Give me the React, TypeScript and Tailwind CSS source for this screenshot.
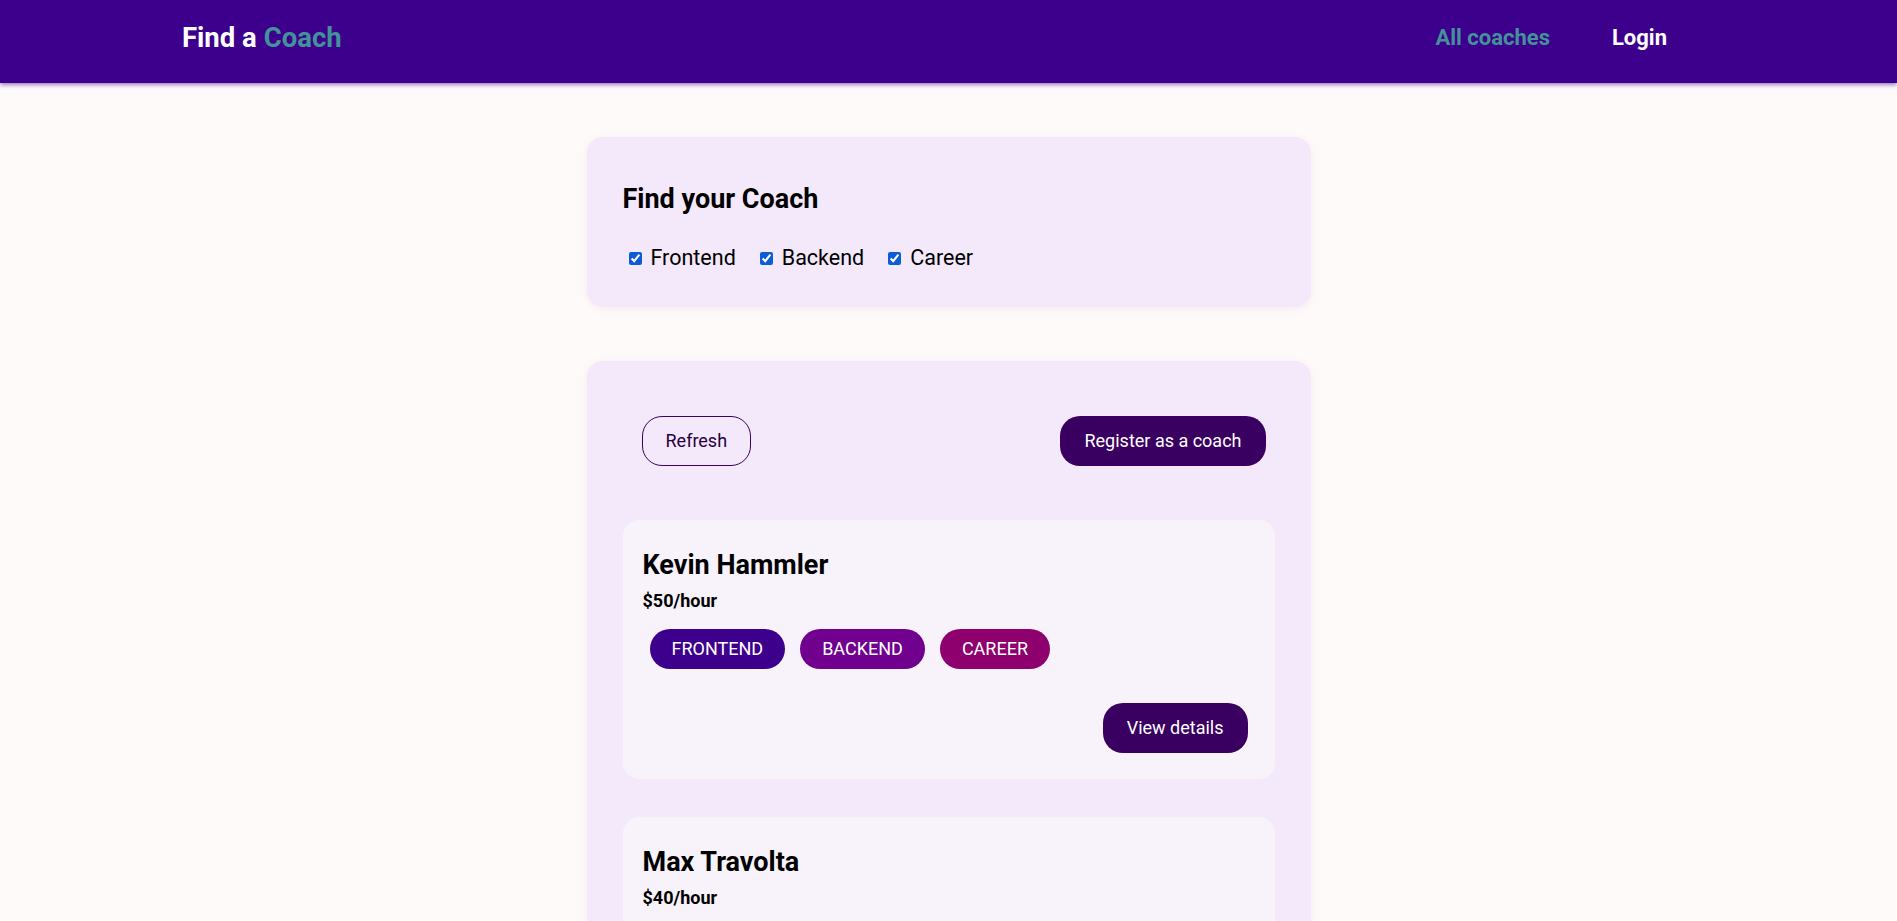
import { useState } from "react";

type Area = "frontend" | "backend" | "career";

const coaches: { id: string; name: string; rate: number; areas: Area[] }[] = [
  { id: "c1", name: "Kevin Hammler", rate: 50, areas: ["frontend", "backend", "career"] },
  { id: "c2", name: "Max Travolta", rate: 40, areas: ["frontend", "career"] },
];

const badgeColors: Record<Area, string> = {
  frontend: "bg-[#3d008d]",
  backend: "bg-[#71008f]",
  career: "bg-[#8d006e]",
};

function CoachItem({ name, rate, areas }: { name: string; rate: number; areas: Area[] }) {
  return (
    <li className="rounded-2xl bg-[#f8f3fb] pl-[20px] pr-[27px] pt-[29px] pb-[26px]">
      <h3 className="text-[27px] font-bold leading-[32px] text-black">{name}</h3>
      <h4 className="mt-[9px] text-[18px] font-bold leading-[22px] text-black">${rate}/hour</h4>
      <div className="mt-[17px] ml-[7px] flex gap-[15px]">
        {areas.map((a) => (
          <span
            key={a}
            className={`${badgeColors[a]} h-[40px] px-[22px] rounded-full flex items-center text-[18px] leading-[22px] text-white uppercase`}
          >
            {a}
          </span>
        ))}
      </div>
      <div className="mt-[34px] flex justify-end">
        <button className="h-[50px] px-[24px] rounded-[20px] bg-[#3a0061] text-white text-[18px] leading-[22px]">
          View details
        </button>
      </div>
    </li>
  );
}

export default function App() {
  const [filters, setFilters] = useState<Record<Area, boolean>>({
    frontend: true,
    backend: true,
    career: true,
  });

  const toggle = (a: Area) => setFilters((f) => ({ ...f, [a]: !f[a] }));

  const visible = coaches.filter((c) => c.areas.some((a) => filters[a]));

  return (
    <div className="min-h-screen bg-[#fffafa] font-['Roboto',sans-serif] text-black">
      <header className="relative z-10 h-[83px] bg-[#3d008d] shadow-[0_2px_4px_rgba(61,0,141,0.5)]">
        <nav className="h-[75px] flex items-center justify-between pl-[182px] pr-[230px]">
          <h1 className="text-[27.5px] font-bold leading-[32px] text-white">
            <a href="#">
              Find a <span className="text-[#43929a]">Coach</span>
            </a>
          </h1>
          <ul className="flex items-center gap-[62px] text-[22px] font-bold leading-[26px]">
            <li>
              <a href="#" className="text-[#43929a]">All coaches</a>
            </li>
            <li>
              <a href="#" className="text-white">Login</a>
            </li>
          </ul>
        </nav>
      </header>

      <main className="flex flex-col items-center pt-[54px] gap-[54px]">
        <section className="w-[724px] rounded-2xl bg-[#f4e8fb] shadow-[0_2px_10px_rgba(120,60,140,0.08)] px-[36px] pt-[46px] pb-[37px]">
          <h2 className="text-[27px] font-bold leading-[32px]">Find your Coach</h2>
          <div className="mt-[31px] flex items-center h-[24px] text-[21.5px] leading-[24px]">
            {(["frontend", "backend", "career"] as Area[]).map((a, i) => (
              <label key={a} className={`flex items-center ${i === 0 ? "ml-[6px]" : "ml-[24px]"}`}>
                <input
                  type="checkbox"
                  checked={filters[a]}
                  onChange={() => toggle(a)}
                  className="m-0 w-[13px] h-[13px] accent-[#0b5cd5]"
                />
                <span className="ml-[9px] capitalize">{a}</span>
              </label>
            ))}
          </div>
        </section>

        <section className="w-[724px] rounded-2xl bg-[#f4e8fb] shadow-[0_2px_10px_rgba(120,60,140,0.08)] px-[36px] pt-[55px] pb-[40px]">
          <div className="flex justify-between pl-[19px] pr-[9px]">
            <button className="h-[50px] px-[23px] rounded-[20px] border border-[#3a0061] text-[#270041] text-[18px] leading-[22px]">
              Refresh
            </button>
            <button className="h-[50px] px-[24px] rounded-[20px] bg-[#3a0061] text-white text-[18px] leading-[22px]">
              Register as a coach
            </button>
          </div>
          <ul className="mt-[54px] flex flex-col gap-[38px]">
            {visible.map((c) => (
              <CoachItem key={c.id} name={c.name} rate={c.rate} areas={c.areas} />
            ))}
          </ul>
        </section>
      </main>
    </div>
  );
}
